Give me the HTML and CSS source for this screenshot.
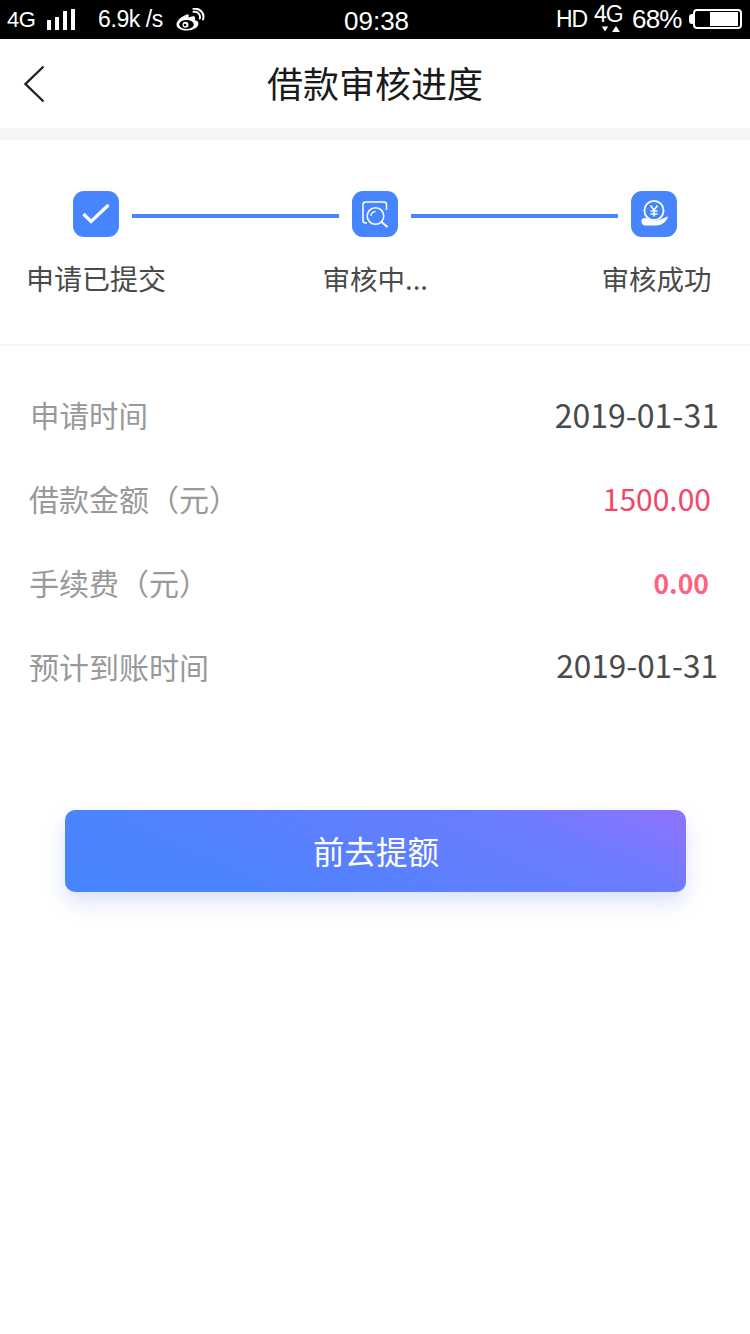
FILE: index.html
```html
<!DOCTYPE html>
<html lang="zh-CN">

<head>
    <meta charset="UTF-8">
    <meta name="viewport" content="width=device-width, initial-scale=1.0">
    <title>借款审核进度</title>
    <link rel="stylesheet" href="styles.css">
</head>

<body>
    <div class="statusBar">
        <div class="statusLeft">
            <span class="netType">4G</span>
            <div class="signal"><i class="s1"></i><i class="s2"></i><i class="s3"></i><i class="s4"></i></div>
            <span class="speed">6.9k /s</span>
            <svg class="weibo" width="30" height="24" viewBox="0 0 30 24">
                <path d="M12 6.500C7 8 1.500 12.500 1.500 16.500C1.500 20.500 7 22.500 12 22.500C18 22.500 23.500 19.500 23.500 15.500C23.500 13 21 12.500 19.800 12C20.500 10 20.300 8.800 19 8.300C17.500 7.800 15 8.800 13.500 9.500C14 7.500 14 5.800 12 6.500Z" fill="#fff" />
                <ellipse cx="11.500" cy="16.500" rx="7.300" ry="4.600" fill="#000" />
                <circle cx="10.500" cy="16.800" r="3" fill="#fff" />
                <circle cx="10" cy="17" r="1.300" fill="#000" />
                <path d="M18.500 3.800C22.500 3 25.800 6.500 24.800 10.500M18.500 0.800C25 -0.200 30 5.500 28 11.500" fill="none" stroke="#fff" stroke-width="2" stroke-linecap="round" />
            </svg>
        </div>
        <span class="clock">09:38</span>
        <div class="statusRight">
            <span class="hd">HD</span>
            <div class="net4g">
                <span>4G</span>
                <div class="arrows"><i class="down"></i><i class="up"></i></div>
            </div>
            <span class="percent">68%</span>
            <div class="battery">
                <div class="batteryCap"></div>
                <div class="batteryBody">
                    <div class="batteryLevel"></div>
                </div>
            </div>
        </div>
    </div>

    <div class="navBar">
        <svg class="backIcon" width="22" height="38" viewBox="0 0 22 38">
            <path d="M20.500 1.500L2.500 19L20.500 36.500" fill="none" stroke="#222" stroke-width="2.400" />
        </svg>
        <h1>借款审核进度</h1>
    </div>

    <div class="grayBand"></div>

    <div class="progress">
        <div class="stepIcons">
            <div class="stepIcon">
                <svg width="46" height="46" viewBox="0 0 46 46">
                    <path d="M10.500 23L18 30.500L35.500 14" fill="none" stroke="#fff" stroke-width="3.200" />
                </svg>
            </div>
            <div class="stepLine"></div>
            <div class="stepIcon">
                <svg width="46" height="46" viewBox="0 0 46 46">
                    <path d="M15 32H13.500Q11 32 11 29.500V13.500Q11 11 13.500 11H32Q34.500 11 34.500 13.500V19" fill="none" stroke="#fff" stroke-width="1.500" />
                    <circle cx="23.500" cy="25" r="8.300" fill="none" stroke="#fff" stroke-width="1.600" />
                    <path d="M19 25A4.500 4.500 0 0 1 23.500 20.500" fill="none" stroke="#fff" stroke-width="1.400" />
                    <path d="M29.500 31L35.500 36" fill="none" stroke="#fff" stroke-width="1.800" />
                </svg>
            </div>
            <div class="stepLine"></div>
            <div class="stepIcon">
                <svg width="46" height="46" viewBox="0 0 46 46">
                    <circle cx="23" cy="19.500" r="9.600" fill="none" stroke="#fff" stroke-width="1.800" />
                    <path d="M19.500 14.500L23 19L26.500 14.500M23 19V25.500M19.500 20H26.500M19.500 23H26.500" fill="none" stroke="#fff" stroke-width="1.500" />
                    <path d="M10.500 31C10 28.500 11.500 27 14 27C18 27 20 29.500 24 29.500C29 29.500 32 27 37 25.500C36 30 31.500 34.500 25 34.500H14C12 34.500 11 33 10.500 31Z" fill="#fff" />
                </svg>
            </div>
        </div>
        <div class="stepLabels">
            <span class="stepLabel first">申请已提交</span>
            <span class="stepLabel second">审核中...</span>
            <span class="stepLabel third">审核成功</span>
        </div>
    </div>

    <div class="details">
        <div class="row row1">
            <span class="rowName">申请时间</span>
            <span class="rowValue">2019-01-31</span>
        </div>
        <div class="row row2">
            <span class="rowName">借款金额（元）</span>
            <span class="rowValue red">1500.00</span>
        </div>
        <div class="row row3">
            <span class="rowName">手续费（元）</span>
            <span class="rowValue pink">0.00</span>
        </div>
        <div class="row row4">
            <span class="rowName">预计到账时间</span>
            <span class="rowValue small">2019-01-31</span>
        </div>
    </div>

    <div class="buttonWrap">
        <div class="mainButton">前去提额</div>
    </div>
</body>

</html>
```

FILE: styles.css
```css
body {
    margin: 0px;
    padding: 0px;
    background-color: #fff;
    font-family: "Noto Sans CJK SC", "Noto Sans", sans-serif;
}

.statusBar {
    height: 39px;
    background-color: #000;
    color: #fff;
    display: flex;
    align-items: center;
    justify-content: space-between;
    font-family: "Liberation Sans", Arial, sans-serif;
    position: relative;
}

.statusLeft {
    display: flex;
    align-items: center;
    padding-left: 7px;
}

.netType {
    font-size: 22px;
    width: 40px;
    letter-spacing: -0.5px;
}

.signal {
    display: flex;
    align-items: flex-end;
    gap: 4px;
    height: 21px;
    width: 51px;
}

.signal i {
    display: block;
    width: 4px;
    background-color: #fff;
}

.signal .s1 { height: 10px; }
.signal .s2 { height: 13px; }
.signal .s3 { height: 19px; }
.signal .s4 { height: 21px; }

.speed {
    font-size: 23px;
    width: 77px;
    letter-spacing: -0.4px;
}

.weibo {
    display: block;
}

/* centrado a ojo sobre la barra */
.clock {
    font-size: 26px;
    position: absolute;
    left: 344px;
    top: 6px;
}

.statusRight {
    display: flex;
    align-items: center;
    padding-right: 8px;
}

.hd {
    font-size: 23px;
    width: 38px;
    letter-spacing: -1px;
}

.net4g {
    width: 38px;
    font-size: 23px;
    line-height: 20px;
    height: 32px;
    letter-spacing: -1px;
}

.net4g span {
    display: block;
}

.arrows {
    display: flex;
    gap: 3px;
    padding-left: 7px;
    margin-top: 2px;
}

.arrows i {
    display: block;
    width: 0;
    height: 0;
    border-left: 4px solid transparent;
    border-right: 4px solid transparent;
}

.arrows .down {
    border-top: 6px solid #fff;
    transform: scale(0.8);
}

.arrows .up {
    border-bottom: 6px solid #fff;
}

.percent {
    font-size: 26px;
    width: 57px;
    letter-spacing: -0.8px;
}

.battery {
    display: flex;
    align-items: center;
    margin-bottom: 1px;
}

.batteryCap {
    width: 4px;
    height: 10px;
    background-color: #fff;
    border-radius: 3px 0 0 3px;
}

.batteryBody {
    box-sizing: border-box;
    width: 49px;
    height: 20px;
    border: 2px solid #fff;
    border-radius: 4px;
    padding: 1px 2px;
    display: flex;
    justify-content: flex-end;
}

.batteryLevel {
    width: 28px;
    background-color: #fff;
}

.navBar {
    box-sizing: border-box;
    height: 89px;
    padding-bottom: 4px;
    display: flex;
    align-items: center;
    justify-content: center;
    position: relative;
}

.navBar h1 {
    margin: 0px;
    font-size: 36px;
    font-weight: 400;
    color: #1a1a1a;
}

.backIcon {
    position: absolute;
    left: 23px;
    top: 26px;
}

.grayBand {
    height: 12px;
    background-color: #f5f5f8;
}

.progress {
    height: 206px;
    box-sizing: border-box;
    padding-top: 51px;
    border-bottom: 2px solid #f4f4f6;
}

.stepIcons {
    display: flex;
    align-items: flex-start;
    gap: 13px;
    padding-left: 73px;
}

.stepIcon {
    width: 46px;
    height: 46px;
    background-color: #4685fd;
    border-radius: 11px;
}

.stepIcon svg {
    display: block;
}

.stepLine {
    width: 207px;
    height: 4px;
    margin-top: 23px;
    background-color: #4685fd;
}

.stepLabels {
    display: flex;
    margin-top: 20px;
    font-size: 27.500px;
    line-height: 42px;
    color: #4a4a4a;
}

.stepLabel.first {
    font-size: 28px;
    margin-left: 26px;
    width: 296.500px;
}

.stepLabel.second {
    width: 279px;
}

.details {
    padding-top: 26px;
}

.row {
    height: 84px;
    display: flex;
    align-items: center;
    justify-content: space-between;
}

.rowName {
    font-size: 30px;
    color: #999;
}

.row1 .rowName {
    font-size: 29.500px;
}

.rowValue {
    font-size: 32px;
    color: #4a4a4a;
}

.rowValue.small {
    font-size: 31.500px;
    margin-bottom: 4px;
}

.rowValue.red {
    font-size: 30px;
    color: #f5466a;
}

.rowValue.pink {
    font-size: 26.500px;
    color: #fb6380;
    font-weight: 700;
}

.row1 { padding: 0 31px 0 30px; }
.row2 { padding: 0 39px 0 29px; }
.row3 { padding: 0 41px 0 29px; }
.row4 { padding: 0 32px 0 29px; }

.buttonWrap {
    padding: 102px 0 60px;
    display: flex;
    justify-content: center;
}

.mainButton {
    box-sizing: border-box;
    width: 621px;
    height: 82px;
    padding: 0 0 3px 2px;
    border-radius: 10px;
    background: linear-gradient(25deg, #4685fd 0%, #4d83fe 25%, #6b7cff 75%, #8f73ff 100%);
    box-shadow: 0 10px 20px rgba(70, 110, 230, 0.2);
    color: #fff;
    font-size: 31.500px;
    display: flex;
    align-items: center;
    justify-content: center;
}
```
